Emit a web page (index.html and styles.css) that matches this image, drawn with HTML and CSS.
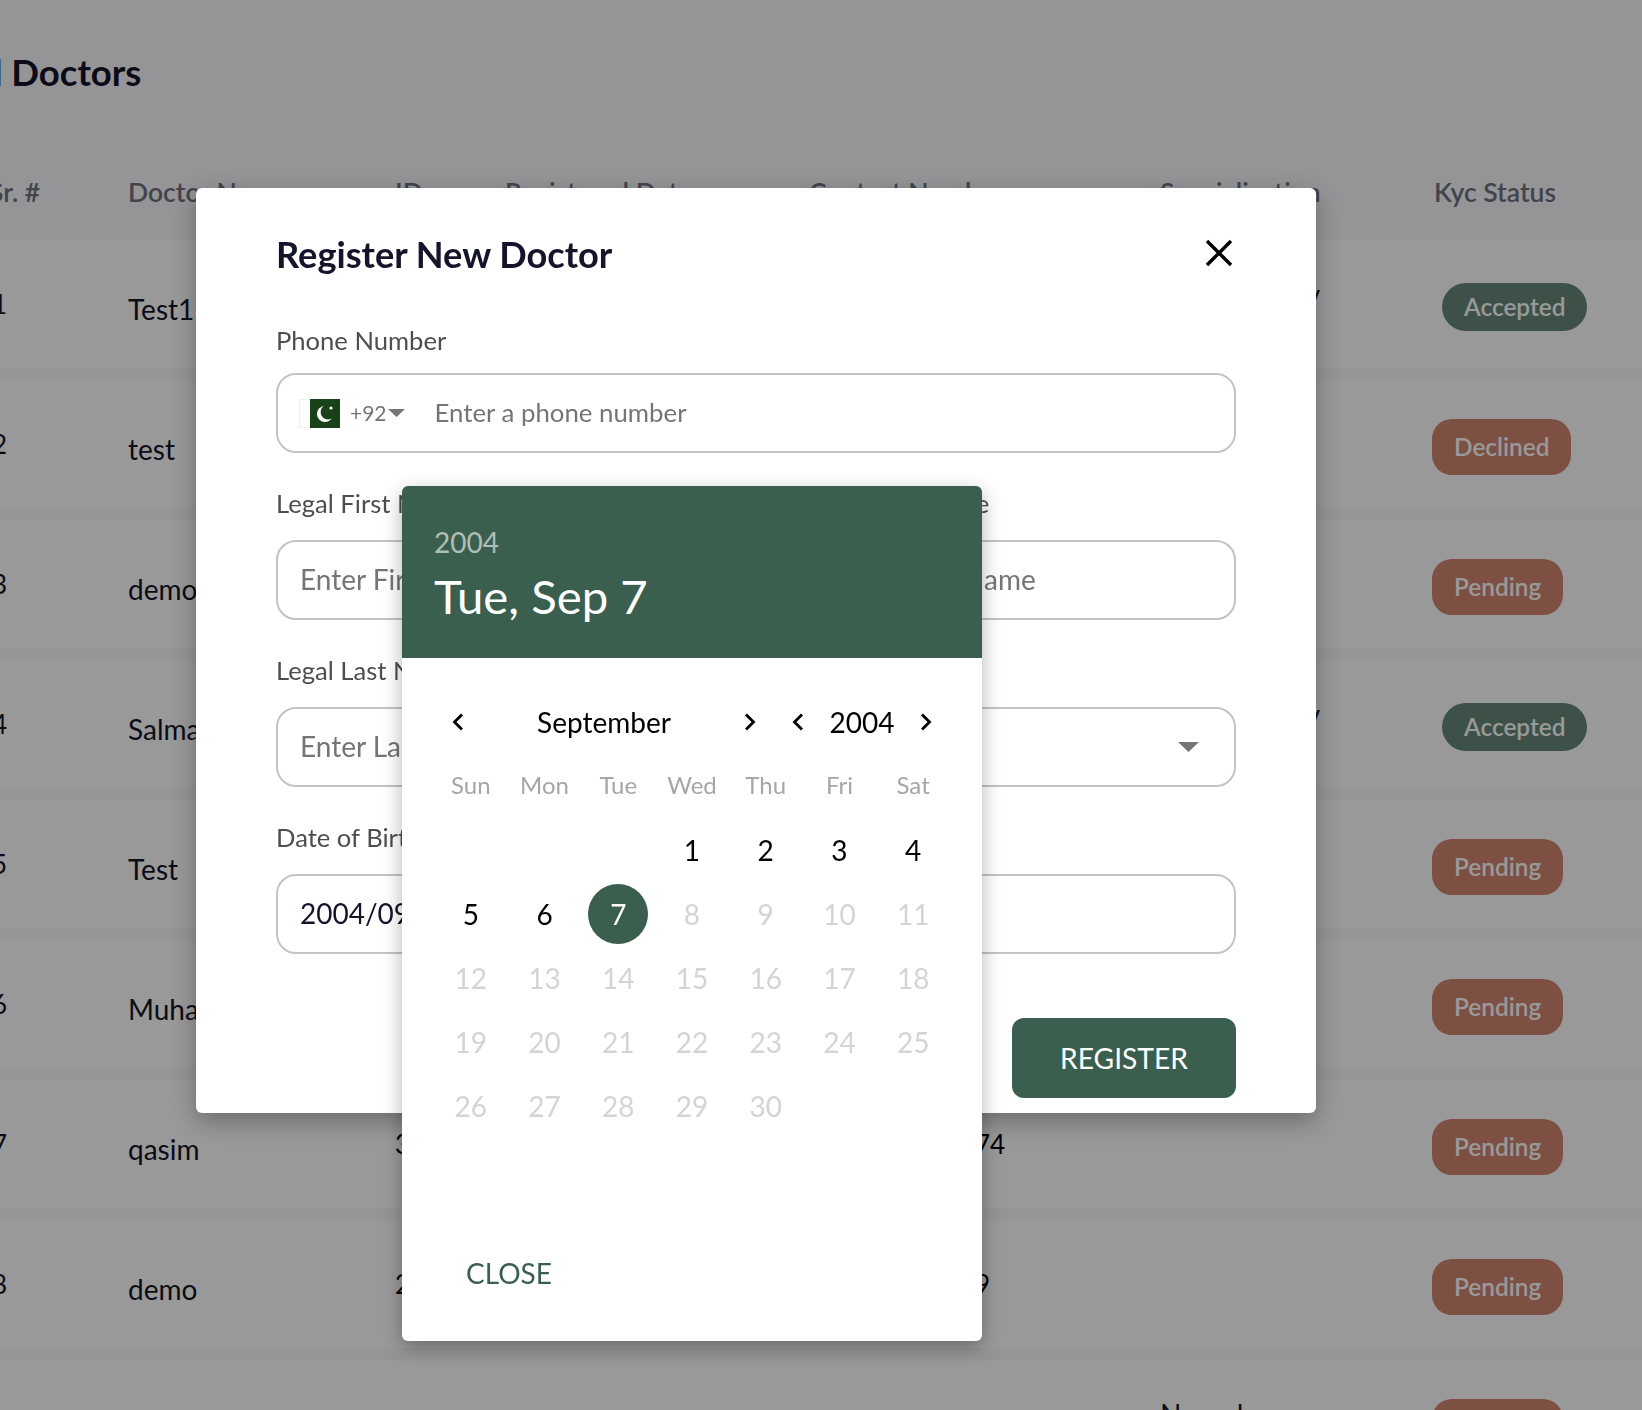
FILE: index.html
```html
<!DOCTYPE html>
<html lang="en">
<head>
    <meta charset="UTF-8">
    <title>All Doctors</title>
    <link rel="stylesheet" href="styles.css">
</head>
<body>
    <div class="page">
        <h1 class="pageTitle">All Doctors</h1>
        <div class="tableRow tableHead">
            <div class="headSr">Sr. #</div>
            <div>Doctor Name</div>
            <div>ID</div>
            <div>Registered Date</div>
            <div>Contact Number</div>
            <div>Specialization</div>
            <div class="kycHead">Kyc Status</div>
        </div>
        <div class="tableRow">
            <div class="cellSr">1</div>
            <div class="cellName">Test1</div>
            <div class="cellId">3520212345678</div>
            <div class="cellDate">2021/09/01</div>
            <div class="cellPhone">+923001234567</div>
            <div class="cellSpec">Dermatology</div>
            <div class="cellKyc"><span class="pill pillAccepted">Accepted</span></div>
        </div>
        <div class="tableRow">
            <div class="cellSr">2</div>
            <div class="cellName">test</div>
            <div class="cellId">3520212345679</div>
            <div class="cellDate">2021/09/02</div>
            <div class="cellPhone">+923001234568</div>
            <div class="cellSpec"></div>
            <div class="cellKyc"><span class="pill pillOther">Declined</span></div>
        </div>
        <div class="tableRow">
            <div class="cellSr">3</div>
            <div class="cellName">demo</div>
            <div class="cellId">3520212345680</div>
            <div class="cellDate">2021/09/03</div>
            <div class="cellPhone">+923001234569</div>
            <div class="cellSpec"></div>
            <div class="cellKyc"><span class="pill pillOther">Pending</span></div>
        </div>
        <div class="tableRow">
            <div class="cellSr">4</div>
            <div class="cellName">Salman</div>
            <div class="cellId">3520212345681</div>
            <div class="cellDate">2021/09/04</div>
            <div class="cellPhone">+923001234570</div>
            <div class="cellSpec">Dermatology</div>
            <div class="cellKyc"><span class="pill pillAccepted">Accepted</span></div>
        </div>
        <div class="tableRow">
            <div class="cellSr">5</div>
            <div class="cellName">Test</div>
            <div class="cellId">3520212345682</div>
            <div class="cellDate">2021/09/05</div>
            <div class="cellPhone">+923001234571</div>
            <div class="cellSpec"></div>
            <div class="cellKyc"><span class="pill pillOther">Pending</span></div>
        </div>
        <div class="tableRow">
            <div class="cellSr">6</div>
            <div class="cellName">Muhammad</div>
            <div class="cellId">3520212345683</div>
            <div class="cellDate">2021/09/06</div>
            <div class="cellPhone">+923001234572</div>
            <div class="cellSpec"></div>
            <div class="cellKyc"><span class="pill pillOther">Pending</span></div>
        </div>
        <div class="tableRow">
            <div class="cellSr">7</div>
            <div class="cellName">qasim</div>
            <div class="cellId">3520212345684</div>
            <div class="cellDate">2021/09/07</div>
            <div class="cellPhone">3001234567474</div>
            <div class="cellSpec"></div>
            <div class="cellKyc"><span class="pill pillOther">Pending</span></div>
        </div>
        <div class="tableRow">
            <div class="cellSr">8</div>
            <div class="cellName">demo</div>
            <div class="cellId">2520212345685</div>
            <div class="cellDate">2021/09/08</div>
            <div class="cellPhone">300123456789</div>
            <div class="cellSpec"></div>
            <div class="cellKyc"><span class="pill pillOther">Pending</span></div>
        </div>
        <div class="tableRow">
            <div class="cellSr">9</div>
            <div class="cellName">Ali</div>
            <div class="cellId">3520212345686</div>
            <div class="cellDate">2021/09/09</div>
            <div class="cellPhone">+923001234573</div>
            <div class="cellSpec">Neurology</div>
            <div class="cellKyc"><span class="pill pillOther">Pending</span></div>
        </div>
    </div>

    <div class="backdrop"></div>

    <div class="modal">
        <div class="modalHeader">
            <h2 class="modalTitle">Register New Doctor</h2>
            <svg class="closeIcon" viewBox="0 0 28 28" width="28" height="28">
                <path d="M2 2 L26 26 M26 2 L2 26" fill="none" stroke="#000" stroke-width="3.4"/>
            </svg>
        </div>

        <label class="fieldLabel phoneLabel">Phone Number</label>
        <div class="field phoneField">
            <svg class="flag" viewBox="0 0 41 29" width="41" height="29">
                <rect width="41" height="29" fill="#fff" stroke="#e2e2e2"/>
                <rect x="11" width="30" height="29" fill="#1a4218"/>
                <circle cx="26" cy="15" r="8" fill="#fff"/>
                <circle cx="29" cy="13" r="7.4" fill="#1a4218"/>
                <circle cx="32" cy="9" r="1.6" fill="#fff"/>
            </svg>
            <span class="dialCode">+92</span>
            <svg class="dialArrow" viewBox="0 0 17 8" width="17" height="8"><path d="M0 0 H17 L8.5 8 Z" fill="#757575"/></svg>
            <input class="fieldInput phoneInput" type="text" placeholder="Enter a phone number">
        </div>

        <div class="formGrid">
            <div>
                <label class="fieldLabel">Legal First Name</label>
                <div class="field"><input class="fieldInput" type="text" placeholder="Enter First Name"></div>
            </div>
            <div>
                <label class="fieldLabel">Legal Middle Name</label>
                <div class="field"><input class="fieldInput" type="text" placeholder="Enter Middle Name"></div>
            </div>
            <div>
                <label class="fieldLabel">Legal Last Name</label>
                <div class="field"><input class="fieldInput" type="text" placeholder="Enter Last Name"></div>
            </div>
            <div>
                <label class="fieldLabel">Specialization</label>
                <div class="field selectField">
                    <svg viewBox="0 0 21 10" width="21" height="10"><path d="M0 0 H21 L10.5 10 Z" fill="#757575"/></svg>
                </div>
            </div>
            <div>
                <label class="fieldLabel">Date of Birth</label>
                <div class="field"><input class="fieldInput" type="text" value="2004/09/07"></div>
            </div>
            <div>
                <label class="fieldLabel">National ID</label>
                <div class="field"><input class="fieldInput" type="text"></div>
            </div>
        </div>

        <div class="modalActions">
            <button class="registerButton">REGISTER</button>
        </div>
    </div>

    <div class="calendar">
        <div class="calendarHeader">
            <div class="calendarYear">2004</div>
            <div class="calendarDate">Tue, Sep 7</div>
        </div>
        <div class="calendarNav">
            <span class="navButton"><svg viewBox="0 0 12 18" width="12" height="18"><path d="M10 1.5 L2.5 9 L10 16.5" fill="none" stroke="#000" stroke-width="2.8"/></svg></span>
            <span class="navMonth">September</span>
            <span class="navButton"><svg viewBox="0 0 12 18" width="12" height="18"><path d="M2 1.5 L9.5 9 L2 16.5" fill="none" stroke="#000" stroke-width="2.8"/></svg></span>
            <span class="navButton"><svg viewBox="0 0 12 18" width="12" height="18"><path d="M10 1.5 L2.5 9 L10 16.5" fill="none" stroke="#000" stroke-width="2.8"/></svg></span>
            <span class="navYear">2004</span>
            <span class="navButton"><svg viewBox="0 0 12 18" width="12" height="18"><path d="M2 1.5 L9.5 9 L2 16.5" fill="none" stroke="#000" stroke-width="2.8"/></svg></span>
        </div>
        <div class="calendarGrid weekdays">
            <span>Sun</span><span>Mon</span><span>Tue</span><span>Wed</span><span>Thu</span><span>Fri</span><span>Sat</span>
        </div>
        <div class="calendarGrid days">
            <span></span><span></span><span></span>
            <span class="day">1</span><span class="day">2</span><span class="day">3</span><span class="day">4</span>
            <span class="day">5</span><span class="day">6</span><span class="day"><b class="selectedDay">7</b></span>
            <span>8</span><span>9</span><span>10</span><span>11</span>
            <span>12</span><span>13</span><span>14</span><span>15</span><span>16</span><span>17</span><span>18</span>
            <span>19</span><span>20</span><span>21</span><span>22</span><span>23</span><span>24</span><span>25</span>
            <span>26</span><span>27</span><span>28</span><span>29</span><span>30</span>
        </div>
        <div class="calendarActions">
            <button class="closeButton">CLOSE</button>
        </div>
    </div>
</body>
</html>
```

FILE: styles.css
```css
* {
    box-sizing: border-box;
}

html, body {
    margin: 0;
    height: 1410px;
    overflow: hidden;
}

body {
    font-family: 'Lato', sans-serif;
    background-color: #f9f9fc;
    color: #14142b;
}

.page {
    margin-left: -8px;
    width: 1700px;
    height: 1410px;
    overflow: hidden;
}

.pageTitle {
    margin: 0 0 0 -33px;
    padding-top: 49px;
    height: 152px;
    font-size: 36.5px;
    line-height: 46px;
    font-weight: 700;
}

.tableRow {
    display: grid;
    grid-template-columns: 136px 267px 110px 304px 351px 274px 1fr;
    align-items: center;
    height: 128px;
    margin-bottom: 12px;
    background-color: #fff;
    font-size: 28px;
    color: #14142b;
}

.tableHead {
    height: 88px;
    padding-bottom: 8px;
    margin-bottom: 0;
    background-color: transparent;
    color: #6e7180;
    font-size: 26.5px;
    font-weight: 600;
}

.headSr {
    margin-left: -3px;
}

.cellSr {
    font-size: 26px;
}

.cellName {
    padding-top: 10px;
}

.cellSpec {
    margin-top: -20px;
}

.cellPhone,
.cellId {
    font-size: 26px;
    color: #000;
}

.cellKyc {
    padding-top: 6px;
}

.pill {
    display: inline-block;
    font-size: 24.4px;
    font-weight: 600;
    color: #fff;
}

.pillAccepted {
    margin-left: 8px;
    padding: 0 22px;
    height: 48px;
    line-height: 48px;
    border-radius: 24px;
    background-color: #66877a;
}

.pillOther {
    margin-left: -2px;
    padding: 0 22px;
    height: 56px;
    line-height: 56px;
    border-radius: 20px;
    background-color: #d08570;
}

.backdrop {
    position: fixed;
    inset: 0;
    background-color: rgba(0, 0, 0, 0.4);
}

.modal {
    position: absolute;
    left: 196px;
    top: 188px;
    width: 1120px;
    height: 925px;
    padding: 39px 80px 15px;
    background-color: #fff;
    border-radius: 6px;
    box-shadow: 0 8px 24px rgba(0, 0, 0, 0.3);
}

.modalHeader {
    display: flex;
    justify-content: space-between;
    align-items: center;
    height: 54px;
    margin-bottom: 44px;
}

.modalTitle {
    margin: 0;
    font-size: 36.2px;
    font-weight: 700;
    color: #14142b;
}

.closeIcon {
    margin-right: 3px;
    margin-top: -2px;
}

.fieldLabel {
    display: block;
    height: 30px;
    line-height: 30px;
    margin-bottom: 22px;
    font-size: 25.6px;
    color: #4e4e50;
}

.phoneLabel {
    margin-bottom: 18px;
}

.field {
    display: flex;
    align-items: center;
    height: 80px;
    padding: 0 22px;
    background-color: #fff;
    border: 2px solid #c4c4c6;
    border-radius: 20px;
}

.fieldInput {
    flex: 1;
    width: 100%;
    min-width: 0;
    border: none;
    outline: none;
    padding: 0 0 2px;
    font-family: inherit;
    font-size: 28px;
    color: #14142b;
    background: transparent;
}

.phoneInput {
    font-size: 25.8px;
}

.fieldInput::placeholder {
    color: #757575;
    opacity: 1;
}

.flag {
    flex-shrink: 0;
    margin-left: -1px;
}

.dialCode {
    margin-left: 10px;
    padding-bottom: 2px;
    font-size: 21px;
    color: #757575;
}

.dialArrow {
    margin: 0 30px 0 1px;
    flex-shrink: 0;
}

.formGrid {
    display: grid;
    grid-template-columns: 1fr 1fr;
    column-gap: 36px;
    row-gap: 35px;
    margin-top: 35px;
}

.selectField {
    justify-content: flex-end;
    padding-right: 35px;
}

.modalActions {
    display: flex;
    justify-content: flex-end;
    margin-top: 64px;
}

.registerButton {
    width: 224px;
    height: 80px;
    border: none;
    border-radius: 12px;
    background-color: #3a5f4e;
    color: #fff;
    font-family: inherit;
    font-size: 28.2px;
}

.calendar {
    position: absolute;
    left: 402px;
    top: 486px;
    width: 580px;
    height: 855px;
    display: flex;
    flex-direction: column;
    background-color: #fff;
    border-radius: 6px;
    overflow: hidden;
    box-shadow: 0 6px 20px rgba(0, 0, 0, 0.3);
}

.calendarHeader {
    height: 172px;
    padding: 39px 32px 0;
    background-color: #3a5f4e;
    color: #fff;
}

.calendarYear {
    font-size: 28px;
    line-height: 34px;
    color: rgba(255, 255, 255, 0.6);
}

.calendarDate {
    margin-top: 8px;
    font-size: 47.3px;
    line-height: 58px;
}

.calendarNav {
    display: flex;
    align-items: center;
    height: 64px;
    margin: 32px 32px 0;
    font-size: 28px;
    color: #000;
}

.navButton {
    display: flex;
    justify-content: center;
    align-items: center;
    width: 48px;
}

.navMonth {
    flex: 1;
    text-align: center;
}

.navYear {
    width: 80px;
    text-align: center;
}

.calendarGrid {
    display: grid;
    grid-template-columns: repeat(7, 1fr);
    grid-auto-rows: 64px;
    margin: 0 32px;
    text-align: center;
}

.calendarGrid span {
    display: flex;
    justify-content: center;
    align-items: center;
}

.weekdays {
    grid-auto-rows: 61px;
    margin-bottom: 3px;
    font-size: 24px;
    color: #a6a6a6;
}

.days {
    font-size: 28px;
    color: #d4d4d4;
}

.days .day {
    color: #000;
}

.selectedDay {
    display: flex;
    justify-content: center;
    align-items: center;
    width: 60px;
    height: 60px;
    border-radius: 50%;
    background-color: #3a5f4e;
    color: #fff;
    font-weight: 400;
}

.calendarActions {
    margin-top: auto;
    padding: 0 64px 46px;
}

.closeButton {
    padding: 0;
    height: 44px;
    border: none;
    background: none;
    color: #3a5f4e;
    font-family: inherit;
    font-size: 28px;
}
```
